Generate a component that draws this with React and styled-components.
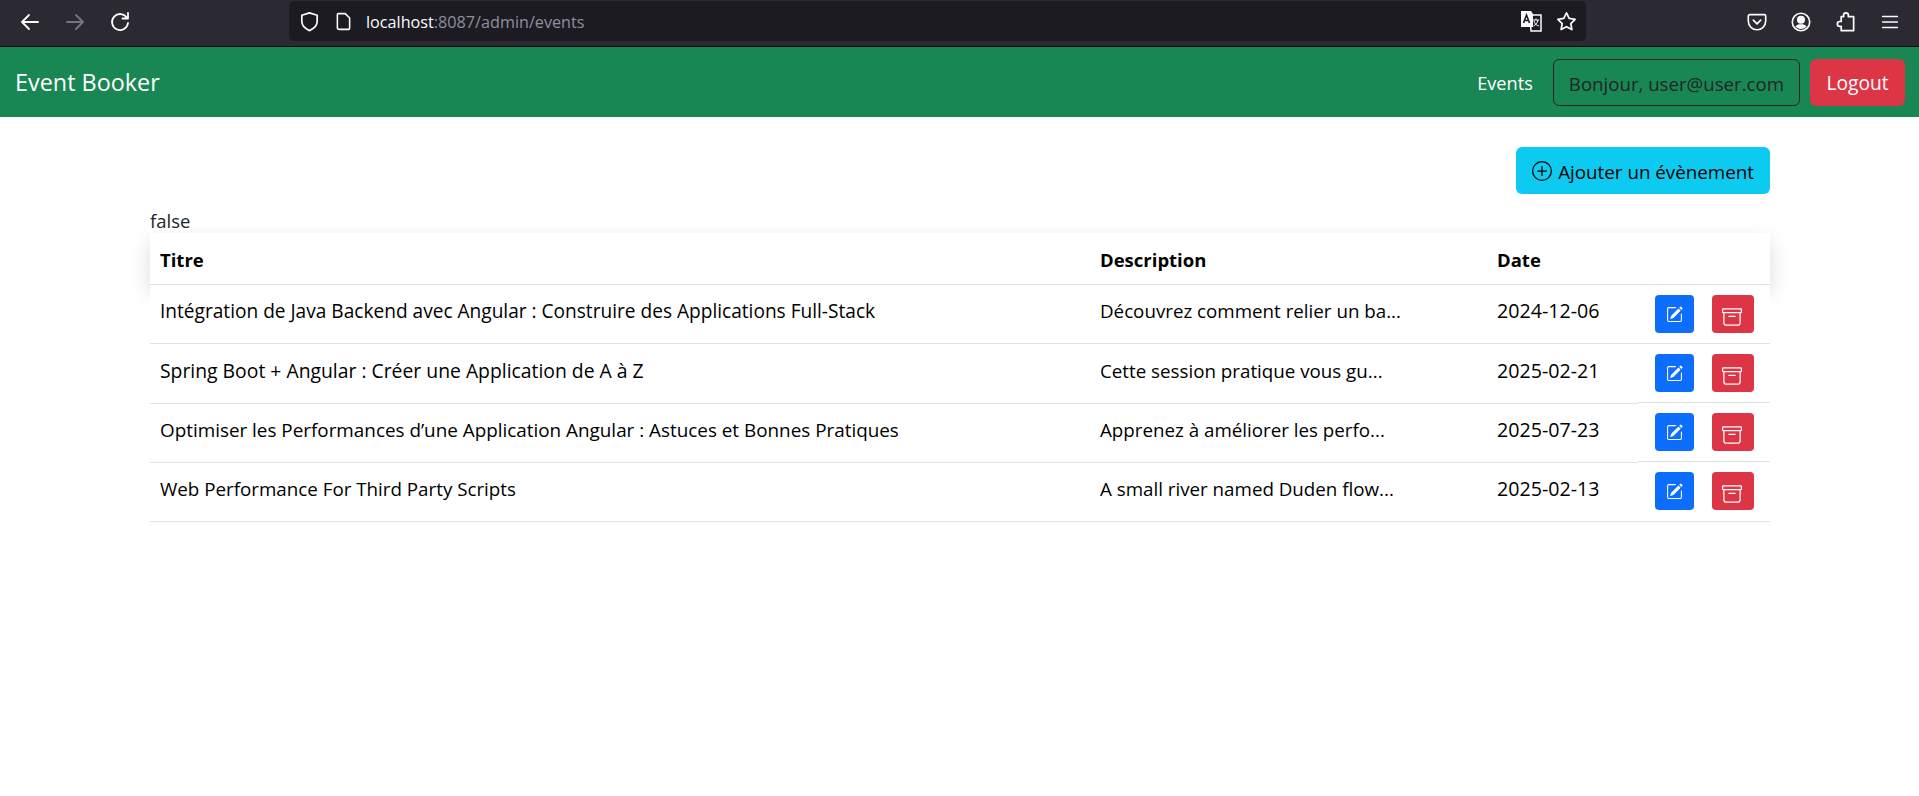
import React from 'react'
import styled, { createGlobalStyle } from 'styled-components'
import { BsPlusCircle, BsPencilSquare, BsArchive } from 'react-icons/bs'

const GlobalStyle = createGlobalStyle`
  html, body {
    margin: 0;
    padding: 0;
    background: #ffffff;
    font-family: "Open Sans", "Noto Sans", sans-serif;
    color: #212529;
  }
  * { box-sizing: border-box; }
`

const events = [
  {
    id: 1,
    title: 'Intégration de Java Backend avec Angular : Construire des Applications Full-Stack',
    titleSize: '19.1px',
    description: 'Découvrez comment relier un ba...',
    date: '2024-12-06'
  },
  {
    id: 2,
    title: 'Spring Boot + Angular : Créer une Application de A à Z',
    titleSize: '19.35px',
    description: 'Cette session pratique vous gu...',
    date: '2025-02-21',
    tall: true,
    raised: true
  },
  {
    id: 3,
    title: 'Optimiser les Performances d’une Application Angular : Astuces et Bonnes Pratiques',
    titleSize: '18.88px',
    description: 'Apprenez à améliorer les perfo...',
    date: '2025-07-23',
    raised: true,
    tight: true
  },
  {
    id: 4,
    title: 'Web Performance For Third Party Scripts',
    titleSize: '18.78px',
    description: 'A small river named Duden flow...',
    date: '2025-02-13',
    tight: true
  }
]

const Icon = ({ dim, children, size = 24 }) => (
  <IconSvg
    width={size}
    height={size}
    viewBox="0 0 24 24"
    fill="none"
    stroke={dim ? '#77767f' : '#fbfbfe'}
    strokeWidth="1.8"
    strokeLinecap="round"
    strokeLinejoin="round"
  >
    {children}
  </IconSvg>
)

const BrowserBar = () => (
  <Chrome>
    <NavIcons>
      <Icon><path d="M20 12H4M11 5l-7 7 7 7" /></Icon>
      <Icon dim><path d="M4 12h16M13 5l7 7-7 7" /></Icon>
      <Icon><path d="M19 8a8 8 0 1 0 1 5M20 3v5.5h-5.5" /></Icon>
    </NavIcons>
    <UrlBar>
      <UrlLeft>
        <Icon size={23}><path d="M12 3l8 2.5V12c0 4.5-3.5 7.5-8 9.5C7.500 19.500 4 16.500 4 12V5.500z" /></Icon>
        <Icon size={21}><path d="M6 3h8l5 5v11a2 2 0 0 1-2 2H7a2 2 0 0 1-2-2V4a1 1 0 0 1 1-1z" /></Icon>
        <UrlText>localhost<UrlDim>:8087/admin/events</UrlDim></UrlText>
      </UrlLeft>
      <UrlRight>
        <Translate viewBox="0 0 22 22" width="22" height="22">
          <path d="M1 1h10l2 3v13H1z" fill="#fbfbfe" />
          <path d="M10 5h11v16H11z" fill="none" stroke="#fbfbfe" strokeWidth="1.500" />
          <path d="M3.500 13l3-8 3 8M4.700 10.500h3.600" fill="none" stroke="#1c1b22" strokeWidth="1.600" />
          <path d="M13 10h6M16 8.500V10M18 10c-.5 3-2.500 5-4.500 6M14 11c.5 2.500 2.500 4.500 5 5" fill="none" stroke="#fbfbfe" strokeWidth="1" />
        </Translate>
        <Icon size={23}><path d="M12 3l2.800 5.800 6.200.9-4.500 4.400 1.100 6.300L12 17.400l-5.600 3 1.100-6.300L3 9.700l6.200-.9z" /></Icon>
      </UrlRight>
    </UrlBar>
    <ToolIcons>
      <Icon size={22}>
        <path d="M4 4h16a1.500 1.500 0 0 1 1.500 1.500V11c0 5.500-4.500 9.500-9.500 9.500S2.500 16.500 2.500 11V5.500A1.500 1.500 0 0 1 4 4z" />
        <path d="M8 10l4 4 4-4" />
      </Icon>
      <Icon size={22}>
        <circle cx="12" cy="12" r="9.500" />
        <circle cx="12" cy="9.500" r="3.500" fill="#fbfbfe" />
        <path d="M6 17c1-2 3-2.500 6-2.500s5 .5 6 2.500c-1.500 1.500-3.500 2.500-6 2.500S7.500 18.500 6 17z" fill="#fbfbfe" stroke="none" />
      </Icon>
      <Icon size={23}>
        <path d="M10 7V5.500a2.500 2.500 0 0 1 5 0V7h5.500v14.500H7.500V17H6a2.500 2.500 0 0 1 0-5h1.500V7z" />
      </Icon>
      <Icon size={22}><path d="M4 6h16M4 12h16M4 18h16" /></Icon>
    </ToolIcons>
  </Chrome>
)

export default function App() {
  return (
    <>
      <GlobalStyle />
      <BrowserBar />
      <Navbar>
        <Brand>Event Booker</Brand>
        <NavRight>
          <NavLink>Events</NavLink>
          <UserBox>Bonjour, user@user.com</UserBox>
          <LogoutButton>Logout</LogoutButton>
        </NavRight>
      </Navbar>
      <Main>
        <Toolbar>
          <AddButton>
            <BsPlusCircle size={20} />
            <AddLabel>Ajouter un évènement</AddLabel>
          </AddButton>
        </Toolbar>
        <Flag>false</Flag>
        <EventTable>
          <colgroup>
            <col width="940" />
            <col width="397" />
            <col width="151" />
            <col />
          </colgroup>
          <thead>
            <HeadRow>
              <HeadCell>Titre</HeadCell>
              <HeadCell>Description</HeadCell>
              <HeadCell>Date</HeadCell>
              <HeadCell />
            </HeadRow>
          </thead>
          <tbody>
            {events.map(event => (
              <tr key={event.id}>
                <Cell $tall={event.tall} $size={event.titleSize}>{event.title}</Cell>
                <Cell $size="18.75px">{event.description}</Cell>
                <Cell $size="19.65px">{event.date}</Cell>
                <ActionCell $raised={event.raised}>
                  <Actions $tight={event.tight}>
                    <EditButton><BsPencilSquare size={17} /></EditButton>
                    <ArchiveButton><BsArchive size={20} /></ArchiveButton>
                  </Actions>
                </ActionCell>
              </tr>
            ))}
          </tbody>
        </EventTable>
      </Main>
    </>
  )
}

const IconSvg = styled('svg')`
  display: block;
  flex: none;
`

const Chrome = styled('div')`
  display: flex;
  align-items: flex-start;
  height: 47px;
  background: #2b2a33;
  border-bottom: 1px solid #0c0c0d;
`

const NavIcons = styled('div')`
  display: flex;
  align-items: center;
  gap: 21px;
  width: 289px;
  height: 43px;
  padding-left: 18px;
`

const UrlBar = styled('div')`
  display: flex;
  align-items: center;
  justify-content: space-between;
  width: 1297px;
  height: 40px;
  margin-top: 1px;
  padding: 0 8px 0 9px;
  background: #1c1b22;
  border-radius: 5px;
`

const UrlLeft = styled('div')`
  display: flex;
  align-items: center;
  gap: 12px;
`

const UrlRight = styled('div')`
  display: flex;
  align-items: center;
  gap: 13px;
`

const Translate = styled('svg')`
  display: block;
`

const UrlText = styled('span')`
  padding-top: 1px;
  font-size: 16.2px;
  color: #fbfbfe;
`

const UrlDim = styled('span')`
  color: #8f8f9d;
`

const ToolIcons = styled('div')`
  display: flex;
  align-items: center;
  gap: 22px;
  height: 43px;
  margin-left: auto;
  padding-right: 18px;
`

const Navbar = styled('nav')`
  display: flex;
  align-items: center;
  justify-content: space-between;
  height: 70px;
  padding: 0 14px 0 15px;
  background: #198754;
`

const Brand = styled('a')`
  font-size: 23.4px;
  color: #ffffff;
`

const NavRight = styled('div')`
  display: flex;
  align-items: center;
`

const NavLink = styled('a')`
  margin-right: 20px;
  padding-top: 2px;
  font-size: 18.2px;
  color: #ffffff;
`

const UserBox = styled('span')`
  display: flex;
  align-items: center;
  height: 47px;
  padding: 2px 15px 0;
  border: 1px solid #212529;
  border-radius: 6px;
  font-size: 18.65px;
  color: #212529;
`

const LogoutButton = styled('button')`
  width: 95px;
  height: 47px;
  margin-left: 10px;
  padding: 1px 0 0;
  border: none;
  border-radius: 6px;
  background: #dc3545;
  font-family: inherit;
  font-size: 19.2px;
  color: #ffffff;
`

const Main = styled('main')`
  padding: 30px 149px 0 150px;
`

const Toolbar = styled('div')`
  display: flex;
  justify-content: flex-end;
`

const AddButton = styled('button')`
  display: flex;
  align-items: center;
  gap: 6px;
  height: 47px;
  padding: 0 16px;
  border: none;
  border-radius: 6px;
  background: #0dcaf0;
  font-family: inherit;
  font-size: 18.8px;
  color: #000000;
`

const AddLabel = styled('span')`
  padding-top: 2px;
`

const Flag = styled('div')`
  margin-top: 14px;
  height: 25px;
  font-size: 18.5px;
  line-height: 25px;
`

const EventTable = styled('table')`
  width: 100%;
  border-collapse: separate;
  border-spacing: 0;
  table-layout: fixed;
  font-size: 18.5px;
  color: #000000;
`

const HeadRow = styled('tr')`
  box-shadow: 0 8px 20px rgba(0, 0, 0, 0.15);
`

const HeadCell = styled('th')`
  height: 52px;
  padding: 2px 10px 0;
  background: #ffffff;
  border-bottom: 1px solid #dee2e6;
  font-weight: 700;
  text-align: left;
`

const Cell = styled('td')`
  position: relative;
  height: ${props => (props.$tall ? '60px' : '59px')};
  padding: 0 10px 6px;
  background: #ffffff;
  border-bottom: 1px solid #dee2e6;
  font-size: ${props => props.$size};
  line-height: 26px;
  white-space: nowrap;
`

const ActionCell = styled('td')`
  position: relative;
  padding: 0 10px;
  vertical-align: top;
  background: #ffffff;
  border-bottom: 1px solid ${props => (props.$raised ? '#ffffff' : '#dee2e6')};
  box-shadow: ${props => (props.$raised ? 'inset 0 -1px 0 #dee2e6' : 'none')};
`

const Actions = styled('div')`
  display: flex;
  gap: 18px;
  margin-top: ${props => (props.$tight ? '9px' : '10px')};
  padding-left: 7px;
`

const EditButton = styled('button')`
  display: flex;
  align-items: center;
  justify-content: center;
  width: 39px;
  height: 38px;
  padding: 0;
  border: none;
  border-radius: 4px;
  background: #0d6efd;
  color: #ffffff;
`

const ArchiveButton = styled(EditButton)`
  width: 42px;
  padding: 6px 2px 0 0;
  background: #dc3545;
`
